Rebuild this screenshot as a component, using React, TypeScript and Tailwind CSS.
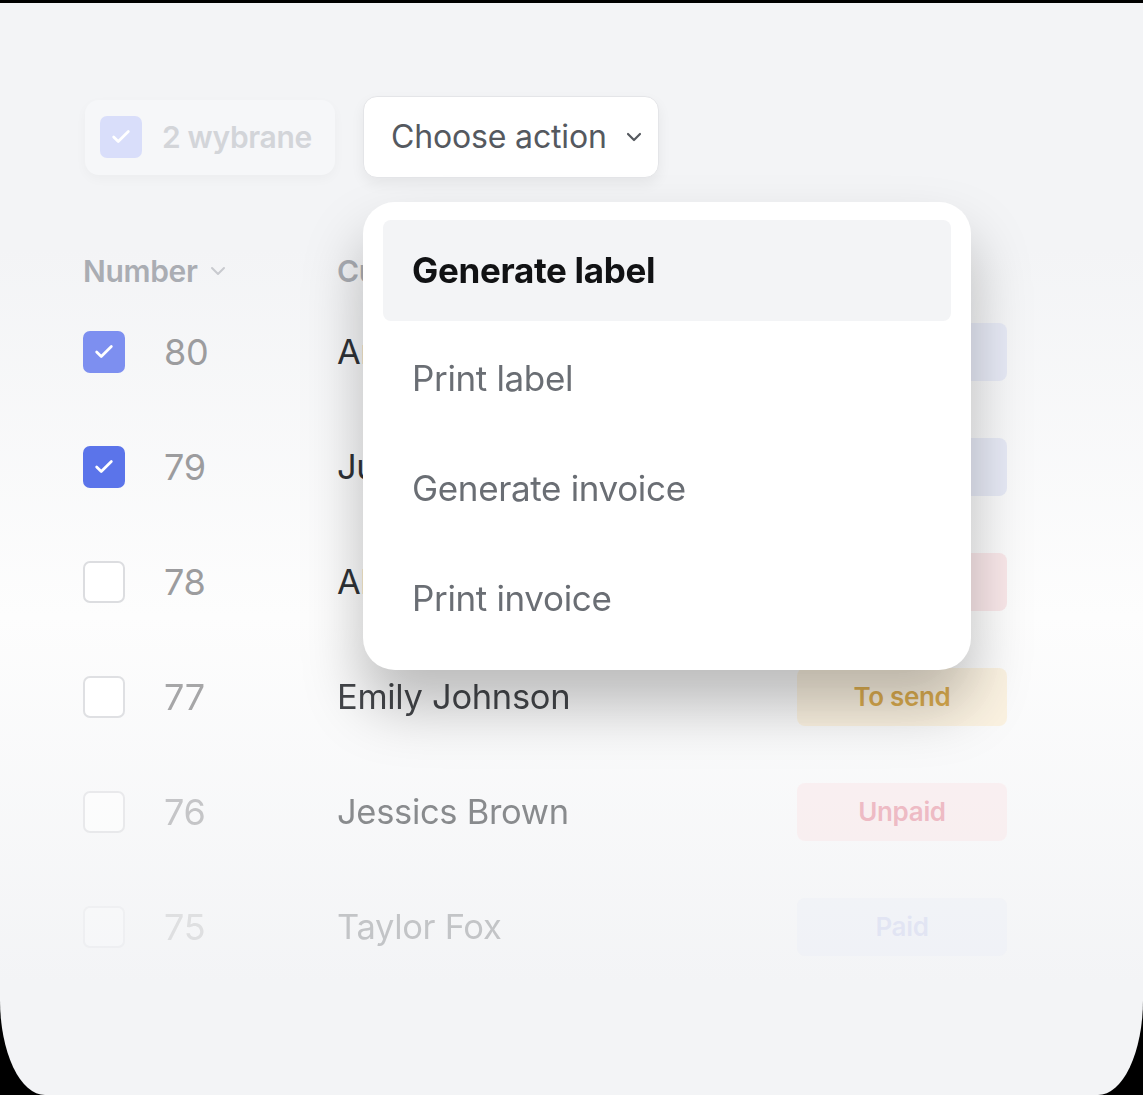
import { Check, ChevronDown } from "lucide-react";

type Row = {
  num: string;
  name: string;
  checked: boolean;
  status: "Paid" | "Unpaid" | "To send";
  fade: string;
  covered?: boolean;
};

// rows 80-78 sit under the open menu, so only the first letters of their names show
const rows: Row[] = [
  { num: "80", name: "Anna Smith", checked: true, status: "Paid", fade: "opacity-100", covered: true },
  { num: "79", name: "Julia Davis", checked: true, status: "Paid", fade: "opacity-100", covered: true },
  { num: "78", name: "Alex Miller", checked: false, status: "Unpaid", fade: "opacity-100", covered: true },
  { num: "77", name: "Emily Johnson", checked: false, status: "To send", fade: "opacity-90" },
  { num: "76", name: "Jessics Brown", checked: false, status: "Unpaid", fade: "opacity-55" },
  { num: "75", name: "Taylor Fox", checked: false, status: "Paid", fade: "opacity-25" },
];

const pillStyles: Record<string, string> = {
  Paid: "bg-[#e7eaf6] text-[#aab3e6]",
  Unpaid: "bg-[#fae8ea] text-[#e6899a]",
  "To send": "bg-[#fbf1de] text-[#d9a43c]",
};

const Checkbox = ({ checked, tone }: { checked: boolean; tone?: string }) =>
  checked ? (
    <div className={`flex h-[42px] w-[42px] items-center justify-center rounded-[7px] ${tone ?? "bg-[#5b74ea]"}`}>
      <Check className="h-[22px] w-[22px] text-white" strokeWidth={3} />
    </div>
  ) : (
    <div className="h-[42px] w-[42px] rounded-[7px] border-2 border-[#dcdde0] bg-white" />
  );

const App = () => {
  return (
    <div className="h-[1095px] w-full overflow-hidden bg-black pt-[3px] font-['Inter',sans-serif] tracking-[-0.02em]">
      <div className="relative h-[1092px] overflow-hidden rounded-bl-[45px_95px] rounded-br-[45px_95px] bg-[#f3f4f6]">
        {/* toolbar */}
        <div className="flex items-center gap-[28px] pl-[85px] pt-[93px]">
          <div className="flex h-[75px] w-[250px] items-center gap-[20px] rounded-[14px] bg-[#f6f7f9] pl-[15px] shadow-[0_4px_12px_rgba(0,0,0,0.03)]">
            <div className="flex h-[42px] w-[42px] items-center justify-center rounded-[7px] bg-[#d9defa]">
              <Check className="h-[22px] w-[22px] text-white" strokeWidth={3} />
            </div>
            <span className="text-[30px] font-semibold text-[#d3d5d9]">2 wybrane</span>
          </div>
          <button className="flex h-[82px] w-[296px] items-center justify-between rounded-[14px] border border-[#e4e5e8] bg-white pl-[27px] pr-[12px] shadow-[0_6px_14px_rgba(0,0,0,0.06)]">
            <span className="text-[32px] tracking-[-0.005em] text-[#55595f]">Choose action</span>
            <ChevronDown className="h-[24px] w-[24px] text-[#55595f]" strokeWidth={2.2} />
          </button>
        </div>

        {/* table */}
        <div className="mt-[70px] bg-linear-to-b from-[#f3f4f6] via-[#fdfdfd] to-[#f3f4f6] pl-[83px] pr-[136px]">
          <div className="flex h-[46px] items-center">
            <div className="flex w-[254px] items-center gap-[8px] text-[30px] font-semibold text-[#aaadb3]">
              Number
              <ChevronDown className="h-[24px] w-[24px] text-[#c8cacf]" strokeWidth={2} />
            </div>
            <div className="w-[26px] overflow-hidden whitespace-nowrap text-[30px] font-semibold text-[#aaadb3]">Customer</div>
          </div>
          {rows.map((r, i) => (
            <div key={r.num} className={`flex h-[115px] items-center ${r.fade}`}>
              <Checkbox checked={r.checked} tone={i === 0 ? "bg-[#7d8ff0]" : undefined} />
              <span className="ml-[39px] w-[173px] text-[36px] text-[#9c9c9e]">{r.num}</span>
              <div className="flex-1">
                <div className={`overflow-hidden whitespace-nowrap text-[34.5px] text-[#2f3236] ${r.covered ? "w-[26px]" : ""}`}>
                  {r.name}
                </div>
              </div>
              <div className={`flex h-[58px] w-[210px] items-center justify-center rounded-[8px] text-[26px] font-semibold ${pillStyles[r.status]}`}>
                {r.covered ? "" : r.status}
              </div>
            </div>
          ))}
        </div>

        {/* dropdown menu */}
        <div className="absolute left-[363px] top-[199px] w-[608px] rounded-[32px] bg-white px-[20px] pb-[17px] pt-[18px] shadow-[0_36px_60px_rgba(0,0,0,0.26)]">
          <div className="flex h-[101px] items-center rounded-[8px] bg-[#f3f4f6] pl-[29px] text-[35px] font-bold text-[#111214]">
            Generate label
          </div>
          <div className="mt-[2px] flex h-[110px] items-center pl-[29px] text-[35px] tracking-[-0.01em] text-[#6a6e74]">Print label</div>
          <div className="flex h-[110px] items-center pl-[29px] text-[35px] tracking-[-0.01em] text-[#6a6e74]">Generate invoice</div>
          <div className="flex h-[110px] items-center pl-[29px] text-[35px] tracking-[-0.01em] text-[#6a6e74]">Print invoice</div>
        </div>
      </div>
    </div>
  );
};

export default App;
